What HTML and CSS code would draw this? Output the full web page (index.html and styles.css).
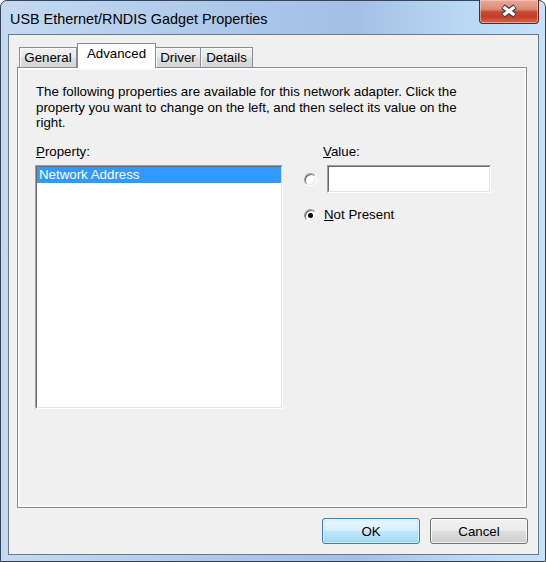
FILE: index.html
```html
<!DOCTYPE html>
<html>
<head>
<meta charset="utf-8">
<title>USB Ethernet/RNDIS Gadget Properties</title>
<link rel="stylesheet" href="styles.css">
</head>
<body>
<div class="window">
  <div class="titlebar">
    <span class="title">USB Ethernet/RNDIS Gadget Properties</span>
    <div class="close">
      <svg width="58" height="23" viewBox="0 0 58 23">
        <path d="M23 6.5 L35 15.5 M35 6.5 L23 15.5" stroke="#3d4046" stroke-width="5.6" stroke-linecap="butt" fill="none"/>
        <path d="M23.6 7 L34.4 15 M34.4 7 L23.6 15" stroke="#ffffff" stroke-width="3.4" stroke-linecap="butt" fill="none"/>
      </svg>
    </div>
  </div>
  <div class="client">
    <div class="tabs">
      <div class="tab first w-general">General</div>
      <div class="tab selected w-advanced">Advanced</div>
      <div class="tab w-driver">Driver</div>
      <div class="tab w-details">Details</div>
    </div>
    <div class="panel">
      <p class="intro">The following properties are available for this network adapter. Click the<br>property you want to change on the left, and then select its value on the<br>right.</p>
      <div class="columns">
        <div class="prop-col">
          <div class="label"><u>P</u>roperty:</div>
          <div class="listbox">
            <div class="listbox-inner">
              <div class="item selected">Network Address</div>
            </div>
          </div>
        </div>
        <div class="value-col">
          <div class="label value-label"><u>V</u>alue:</div>
          <div class="option-row">
            <span class="radio"></span>
            <div class="textbox"><div class="textbox-inner"></div></div>
          </div>
          <div class="option-row second">
            <span class="radio checked"></span>
            <span class="opt-text"><u>N</u>ot Present</span>
          </div>
        </div>
      </div>
    </div>
    <div class="buttons">
      <button class="btn default">OK</button>
      <button class="btn">Cancel</button>
    </div>
  </div>
</div>
</body>
</html>
```
FILE: styles.css
```css
html, body {
  margin: 0;
  padding: 0;
}
body {
  width: 546px;
  height: 562px;
  overflow: hidden;
  font-family: "Liberation Sans", Arial, sans-serif;
  font-size: 13.3px;
  color: #000;
}
.window {
  width: 546px;
  height: 562px;
  box-sizing: border-box;
  border: 1px solid #34455c;
  border-radius: 7px 7px 0 0;
  background: linear-gradient(90deg, #c4daf1 0%, #adc8e9 40%, #a3c0e4 65%, #b9d8f4 85%, #c6e2f9 100%);
  padding: 0 6px 6px 7px;
  display: flex;
  flex-direction: column;
}
.titlebar {
  height: 33px;
  display: flex;
  justify-content: space-between;
  align-items: flex-start;
}
.title {
  font-size: 14.4px;
  line-height: 18px;
  margin-top: 9px;
  margin-left: 2px;
  color: #000;
}
.close {
  margin-top: -1px;
  width: 58px;
  height: 23px;
  border: 1px solid #5a2a22;
  border-top: none;
  border-radius: 0 0 4px 4px;
  background: linear-gradient(180deg, #e9a99a 0%, #dc8b76 40%, #c7462f 52%, #c3412a 75%, #d4684f 100%);
  box-shadow: inset 0 0 0 1px rgba(255, 210, 200, 0.55);
  display: flex;
}
.close svg {
  display: block;
}
.client {
  flex: 1;
  border: 1px solid #6a788c;
  background: #f0f0f0;
  padding: 8px 0 10px 0;
  display: flex;
  flex-direction: column;
}
.tabs {
  display: flex;
  align-items: flex-end;
  height: 25px;
  margin: 0 0 -1px 10px;
  position: relative;
  z-index: 1;
}
.tab {
  box-sizing: border-box;
  height: 20px;
  margin-bottom: 1px;
  border-top: 1px solid #898c95;
  border-right: 1px solid #898c95;
  background: linear-gradient(180deg, #f1f1f1 0%, #e9e9e9 45%, #dcdcdc 55%, #d6d6d6 100%);
  box-shadow: inset 1px 1px 0 #fbfbfb;
  text-align: center;
  line-height: 20px;
  white-space: nowrap;
}
.tab.first {
  border-left: 1px solid #898c95;
}
.tab.selected {
  height: 25px;
  margin-bottom: 0;
  border-left: 1px solid #898c95;
  background: #ffffff;
  box-shadow: none;
  line-height: 20px;
}
.w-general { width: 58px; }
.w-advanced { width: 79px; }
.w-driver { width: 45px; }
.w-details { width: 52px; }
.panel {
  width: 510px;
  height: 441px;
  box-sizing: border-box;
  margin-left: 8px;
  border: 1px solid #898c95;
  background: #f0f0f0;
  box-shadow: inset 0 0 0 1px #ffffff, inset 0 0 0 2px #f9f9f9;
  padding: 16px 0 0 18px;
}
.intro {
  margin: 0;
  line-height: 15.5px;
}
.columns {
  display: flex;
  gap: 21px;
  margin-top: 13.5px;
}
.prop-col {
  width: 247px;
}
.label {
  line-height: 16px;
  margin-bottom: 5px;
}
.listbox {
  margin-left: -1px;
  width: 248px;
  height: 244px;
  box-sizing: border-box;
  border: 1px solid;
  border-color: #a0a0a0 #ffffff #ffffff #a0a0a0;
}
.listbox-inner {
  height: 100%;
  box-sizing: border-box;
  border: 1px solid;
  border-color: #696969 #e3e3e3 #e3e3e3 #696969;
  background: #ffffff;
}
.item {
  height: 16px;
  line-height: 16px;
  padding-left: 2px;
}
.item.selected {
  background: #3399ff;
  color: #ffffff;
}
.value-col {
  display: flex;
  flex-direction: column;
}
.value-label {
  margin-left: 19px;
}
.option-row {
  display: flex;
  align-items: center;
}
.option-row.second {
  margin-top: 14px;
}
.radio {
  position: relative;
  width: 13px;
  height: 13px;
  box-sizing: border-box;
  border-radius: 50%;
  border: 1px solid;
  border-color: #9a9a9a #ffffff #ffffff #9a9a9a;
  background: #ffffff;
  box-shadow: inset 1px 1px 0 #6b6b6b, inset -1px -1px 0 #e3e3e3;
  flex: none;
}
.radio.checked::after {
  content: "";
  position: absolute;
  left: 3px;
  top: 3px;
  width: 5px;
  height: 5px;
  border-radius: 50%;
  background: #000;
}
.textbox {
  margin-left: 10px;
  width: 164px;
  height: 28px;
  box-sizing: border-box;
  border: 1px solid;
  border-color: #a0a0a0 #ffffff #ffffff #a0a0a0;
}
.textbox-inner {
  height: 100%;
  box-sizing: border-box;
  border: 1px solid;
  border-color: #696969 #e3e3e3 #e3e3e3 #696969;
  background: #ffffff;
}
.opt-text {
  margin-left: 7px;
  line-height: 16px;
}
.buttons {
  margin-top: 10px;
  display: flex;
  justify-content: flex-end;
  gap: 10px;
  padding-right: 10px;
}
.btn {
  width: 98px;
  height: 26px;
  box-sizing: border-box;
  border: 1px solid #707070;
  border-radius: 3px;
  background: linear-gradient(180deg, #f2f2f2 0%, #ebebeb 48%, #dddddd 52%, #cfcfcf 100%);
  box-shadow: inset 0 0 0 1px rgba(255, 255, 255, 0.75);
  font-family: "Liberation Sans", Arial, sans-serif;
  font-size: 13.3px;
  color: #000;
  padding: 0;
}
.btn.default {
  border-color: #3c7fb1;
  background: linear-gradient(180deg, #eaf6fd 0%, #d9f0fc 48%, #bee6fd 52%, #a7d9f5 100%);
  box-shadow: inset 0 0 0 1px rgba(255, 255, 255, 0.6), inset 0 0 3px #67cbf3;
}
```
